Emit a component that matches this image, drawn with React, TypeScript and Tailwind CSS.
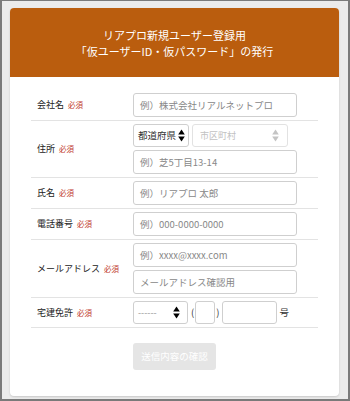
import React from 'react'

const font = { fontFamily: '"Noto Sans CJK JP", "Noto Sans", sans-serif' }

function Required() {
  return <span className="ml-[4px] text-[7.5px] text-[#c0392b]">必須</span>
}

// up/down select arrows
function Arrows({ muted }: { muted?: boolean }) {
  return (
    <svg width="7" height="13" viewBox="0 0 7 13" className="shrink-0">
      <path d="M3.5 0.5 L6.8 5.5 L0.2 5.5 Z" fill={muted ? '#c4c4c4' : '#000'} />
      <path d="M3.5 12.5 L6.8 7.5 L0.2 7.5 Z" fill={muted ? '#c4c4c4' : '#000'} />
    </svg>
  )
}

function TextInput({ placeholder, className = 'w-[164px]' }: { placeholder?: string; className?: string }) {
  return (
    <div
      className={`flex h-[24px] items-center whitespace-nowrap rounded-[3px] border border-[#cfcfcf] bg-white px-[6px] text-[9.5px] text-[#888] ${className}`}
    >
      {placeholder}
    </div>
  )
}

function Row({ label, children }: { label: string; children: React.ReactNode }) {
  return (
    <div className="flex items-center border-b border-[#e3e3e3] py-[3px]">
      <div className="w-[102px] whitespace-nowrap pl-[6px] text-[9px] text-[#222]">
        {label}
        <Required />
      </div>
      <div className="flex flex-col gap-[3px]">{children}</div>
    </div>
  )
}

export default function App() {
  return (
    <div
      className="h-[401px] w-[350px] border-x-2 border-b-2 border-t border-[#7a7a7a] bg-[#ebebeb] pl-[8px] pt-[7px]"
      style={font}
    >
      <div className="h-[388px] w-[329px] overflow-hidden rounded-[4px] bg-white shadow-[0_1px_2px_rgba(0,0,0,0.15)]">
        {/* Header */}
        <div className="flex h-[69px] flex-col items-center justify-center bg-[#ba5d0e] text-[11px] leading-[16px] text-white">
          <p>リアプロ新規ユーザー登録用</p>
          <p>「仮ユーザーID・仮パスワード」の発行</p>
        </div>

        {/* Form */}
        <div className="mx-[21px] mt-[13px]">
          <Row label="会社名">
            <TextInput placeholder="例）株式会社リアルネットプロ" />
          </Row>
          <Row label="住所">
            <div className="flex gap-[3px]">
              <div className="flex h-[23px] w-[56px] items-center justify-between whitespace-nowrap rounded-[3px] border border-[#cfcfcf] bg-white pl-[4px] pr-[3px] text-[9.5px] text-[#333]">
                都道府県
                <Arrows />
              </div>
              <div className="flex h-[23px] w-[96px] items-center justify-between whitespace-nowrap rounded-[3px] border border-[#e2e2e2] bg-white pl-[7px] pr-[8px] text-[9px] text-[#c2c2c2]">
                市区町村
                <Arrows muted />
              </div>
            </div>
            <TextInput placeholder="例）芝5丁目13-14" />
          </Row>
          <Row label="氏名">
            <TextInput placeholder="例）リアプロ 太郎" />
          </Row>
          <Row label="電話番号">
            <TextInput placeholder="例）000-0000-0000" />
          </Row>
          <Row label="メールアドレス">
            <TextInput placeholder="例）xxxx@xxxx.com" />
            <TextInput placeholder="メールアドレス確認用" />
          </Row>
          <Row label="宅建免許">
            <div className="flex items-center text-[9.5px] text-[#333]">
              <div className="flex h-[23px] w-[55px] items-center justify-between rounded-[3px] border border-[#cfcfcf] bg-white pl-[4px] pr-[7px] text-[9px] text-[#999]">
                ------
                <Arrows />
              </div>
              <span className="ml-[3px]">(</span>
              <div className="ml-[1px] h-[23px] w-[20px] rounded-[3px] border border-[#cfcfcf] bg-white" />
              <span className="ml-[1px]">)</span>
              <div className="ml-[3px] h-[23px] w-[55px] rounded-[3px] border border-[#cfcfcf] bg-white" />
              <span className="ml-[2px]">号</span>
            </div>
          </Row>
        </div>

        <div className="mt-[15px] pl-[123px]">
          <div className="flex h-[27px] w-[83px] items-center justify-center whitespace-nowrap rounded-[3px] bg-[#e5e5e5] text-[9.5px] text-white">
            送信内容の確認
          </div>
        </div>
      </div>
    </div>
  )
}
